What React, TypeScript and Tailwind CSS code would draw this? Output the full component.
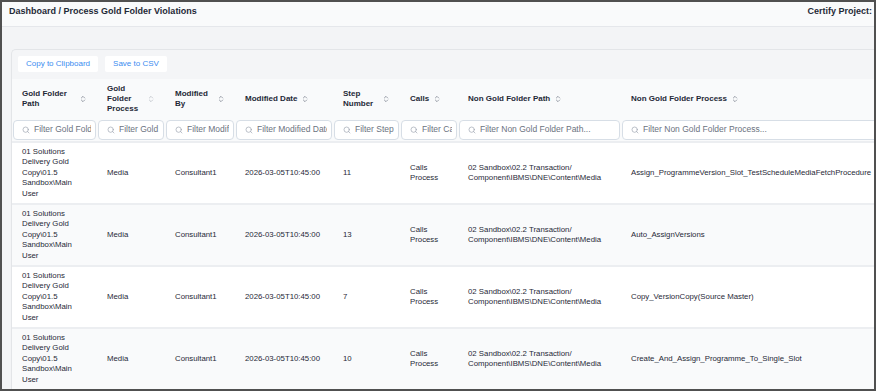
import React from "react";
import { ChevronsUpDown, Search } from "lucide-react";

const cols = [85, 68, 70, 98, 67, 58, 163, 300];

const headers = [
  "Gold Folder Path",
  "Gold Folder Process",
  "Modified By",
  "Modified Date",
  "Step Number",
  "Calls",
  "Non Gold Folder Path",
  "Non Gold Folder Process",
];

const filters = [
  "Filter Gold Folder Path...",
  "Filter Gold Folder Process...",
  "Filter Modified By...",
  "Filter Modified Date...",
  "Filter Step Number...",
  "Filter Calls...",
  "Filter Non Gold Folder Path...",
  "Filter Non Gold Folder Process...",
];

const rows = [
  { step: "11", proc: "Assign_ProgrammeVersion_Slot_TestScheduleMediaFetchProcedure" },
  { step: "13", proc: "Auto_AssignVersions" },
  { step: "7", proc: "Copy_VersionCopy(Source Master)" },
  { step: "10", proc: "Create_And_Assign_Programme_To_Single_Slot" },
];

export default function App() {
  return (
    <div
      className="w-[876px] h-[391px] overflow-hidden border-2 border-[#505050] bg-[#f3f4f6] flex flex-col"
      style={{ fontFamily: '"Liberation Sans", Arial, sans-serif' }}
    >
      <div className="h-[25px] shrink-0 bg-[#f9fafb] border-b border-[#e5e7eb] flex justify-between items-start pt-[3px] pl-[7px] pr-[2px]">
        <div className="text-[9px] font-bold text-[#1f2937]">Dashboard / Process Gold Folder Violations</div>
        <div className="text-[9px] font-bold text-[#1f2937]">Certify Project:</div>
      </div>
      <div className="pt-[22px] pl-[9px] flex-1 min-h-0">
        <div className="w-[911px] border-l border-t border-[#e3e5e8] rounded-tl-[5px] bg-[#f4f5f7] overflow-hidden">
          <div className="h-[29px] flex items-start gap-[7px] pt-[6px] pl-[6px]">
            <button className="h-[16px] px-[8px] bg-white rounded-[2px] text-[8px] text-[#3b8cf0]">Copy to Clipboard</button>
            <button className="h-[16px] px-[8px] bg-white rounded-[2px] text-[8px] text-[#3b8cf0]">Save to CSV</button>
          </div>
          <div className="bg-[#f9fafb]">
            <div className="h-[39px] flex">
              {headers.map((h, i) => (
                <div
                  key={h}
                  style={{ width: cols[i] }}
                  className="shrink-0 px-[10px] flex items-center gap-[4px]"
                >
                  <span className="text-[8px] leading-[10px] font-bold text-[#1f2937]">{h}</span>
                  <ChevronsUpDown
                    size={8}
                    strokeWidth={2}
                    className={i === 1 ? "shrink-0 text-[#b0b5bc]" : "shrink-0 text-[#6b7280]"}
                  />
                </div>
              ))}
            </div>
            <div className="h-[23px] flex">
              {filters.map((f, i) => (
                <div key={f} style={{ width: cols[i] }} className="shrink-0 px-[1px] py-[1.5px]">
                  <div className="h-[20px] rounded-[4px] border border-[#d7dee6] bg-white flex items-center pl-[8px] pr-[4px] gap-[4px] overflow-hidden">
                    <Search size={8} strokeWidth={2} className="shrink-0 text-[#9ca3af]" />
                    <input
                      readOnly
                      placeholder={f}
                      className="w-full min-w-0 bg-transparent outline-none text-[8.5px] placeholder:text-[#6b7280]"
                    />
                  </div>
                </div>
              ))}
            </div>
          </div>
          {rows.map((r, ri) => (
            <div
              key={ri}
              className={
                "h-[62px] flex border-t-2 border-[#eceef1] text-[7.8px] leading-[10.5px] text-[#1f2937] " +
                (ri % 2 === 0 ? "bg-white" : "bg-[#f9fafb]")
              }
            >
              <div style={{ width: cols[0] }} className="shrink-0 px-[10px] flex items-center">
                01 Solutions Delivery Gold Copy\01.5 Sandbox\Main User
              </div>
              <div style={{ width: cols[1] }} className="shrink-0 px-[10px] flex items-center">Media</div>
              <div style={{ width: cols[2] }} className="shrink-0 px-[10px] flex items-center">Consultant1</div>
              <div style={{ width: cols[3] }} className="shrink-0 px-[10px] flex items-center">2026-03-05T10:45:00</div>
              <div style={{ width: cols[4] }} className="shrink-0 px-[10px] flex items-center">{r.step}</div>
              <div style={{ width: cols[5] }} className="shrink-0 px-[10px] flex items-center">
                <div>
                  <div>Calls</div>
                  <div>Process</div>
                </div>
              </div>
              <div style={{ width: cols[6] }} className="shrink-0 px-[10px] flex items-center">
                <div>
                  <div>02 Sandbox\02.2 Transaction/</div>
                  <div>Component\IBMS\DNE\Content\Media</div>
                </div>
              </div>
              <div style={{ width: cols[7] }} className="shrink-0 px-[10px] flex items-center whitespace-nowrap">
                {r.proc}
              </div>
            </div>
          ))}
        </div>
      </div>
    </div>
  );
}
